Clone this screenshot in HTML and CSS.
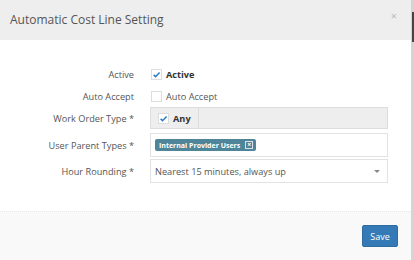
FILE: index.html
```html
<!DOCTYPE html>
<html lang="en">
  <head>
    <meta charset="UTF-8" />
    <meta name="viewport" content="width=device-width, initial-scale=1.0" />
    <title>Automatic Cost Line Setting</title>
    <link rel="stylesheet" href="styles.css">
  </head>
  <body>
    <div class="modal">
      <div class="modal-header">
        <h4 class="modal-title">Automatic Cost Line Setting</h4>
        <span class="close">&times;</span>
      </div>
      <div class="modal-body">
        <div class="row row-active">
          <label class="row-label">Active</label>
          <div class="field">
            <span class="check checked">
              <svg viewBox="0 0 10 10" width="9" height="9"><path d="M1.8 5.4 L4 7.4 L8.4 2.8" fill="none" stroke="#2a7fc4" stroke-width="1.7"/></svg>
            </span>
            <span class="check-text bold">Active</span>
          </div>
        </div>
        <div class="row row-accept">
          <label class="row-label">Auto Accept</label>
          <div class="field">
            <span class="check"></span>
            <span class="check-text">Auto Accept</span>
          </div>
        </div>
        <div class="row row-type">
          <label class="row-label">Work Order Type *</label>
          <div class="field">
            <div class="segment-box">
              <div class="segment">
                <span class="check checked">
                  <svg viewBox="0 0 10 10" width="9" height="9"><path d="M1.8 5.4 L4 7.4 L8.4 2.8" fill="none" stroke="#2a7fc4" stroke-width="1.7"/></svg>
                </span>
                <span class="check-text bold">Any</span>
              </div>
            </div>
          </div>
        </div>
        <div class="row row-parent">
          <label class="row-label">User Parent Types *</label>
          <div class="field">
            <div class="input tags">
              <span class="tag">Internal Provider Users <span class="tag-x">&times;</span></span>
            </div>
          </div>
        </div>
        <div class="row row-round">
          <label class="row-label">Hour Rounding *</label>
          <div class="field">
            <div class="input select">
              <span>Nearest 15 minutes, always up</span>
              <span class="caret"></span>
            </div>
          </div>
        </div>
      </div>
      <div class="modal-footer">
        <button class="btn-save">Save</button>
      </div>
    </div>
    <div class="scroll-thumb"></div>
  </body>
</html>
```

FILE: styles.css
```css
* {
  margin: 0;
  padding: 0;
  box-sizing: border-box;
}
html,
body {
  width: 414px;
  height: 260px;
  overflow: hidden;
}
body {
  background-color: #d4d4d4;
  font-family: "Open Sans", "Liberation Sans", sans-serif;
  color: #555;
  position: relative;
}
.modal {
  width: 411px;
  height: 260px;
  background-color: #fff;
  display: flex;
  flex-direction: column;
}
/* header */
.modal-header {
  height: 40px;
  background-color: #eee;
  display: flex;
  align-items: center;
  justify-content: space-between;
  padding: 0 14px 2px 10px;
}
.modal-title {
  font-size: 12px;
  font-weight: normal;
  color: #555;
}
.close {
  font-size: 11px;
  color: #bbb;
  margin-top: -8px;
}
/* body */
.modal-body {
  height: 171px;
  padding-top: 23px;
}
.row {
  display: flex;
  align-items: center;
}
.row-label {
  width: 134px;
  text-align: right;
  font-size: 9.2px;
  color: #555;
}
.field {
  margin-left: 16px;
  width: 238px;
  display: flex;
  align-items: center;
}
.row-active {
  height: 23px;
}
.row-accept {
  height: 21px;
}
.row-type {
  height: 22px;
}
.row-parent {
  height: 24px;
  margin-top: 4px;
}
.row-round {
  height: 24px;
  margin-top: 2px;
}
.check {
  width: 11px;
  height: 11px;
  border: 1px solid #ddd;
  background-color: #fff;
  display: flex;
  align-items: center;
  justify-content: center;
  margin-left: 1px;
}
.check-text {
  margin-left: 4px;
  font-size: 9.2px;
  color: #555;
}
.bold {
  font-weight: bold;
  color: #333;
}
.segment-box {
  width: 238px;
  height: 22px;
  background-color: #eee;
  border: 1px solid #ddd;
  display: flex;
}
.segment {
  display: flex;
  align-items: center;
  padding: 0 7px 0 6px;
  border-right: 1px solid #ddd;
}
.input {
  width: 238px;
  height: 24px;
  border: 1px solid #e2e2e2;
  display: flex;
  align-items: center;
  padding: 0 5px 0 4px;
  font-size: 9.2px;
  color: #555;
}
.tag {
  background-color: #4e8599;
  color: #fff;
  font-size: 7px;
  font-weight: bold;
  height: 12px;
  padding: 0 3px 0 4px;
  border-radius: 2px;
  display: flex;
  align-items: center;
}
.tag-x {
  margin-left: 5px;
  width: 8px;
  height: 8px;
  border: 1px solid #dde;
  font-size: 7px;
  line-height: 6px;
  text-align: center;
}
.select {
  justify-content: space-between;
}
.caret {
  width: 0;
  height: 0;
  border-left: 3px solid transparent;
  border-right: 3px solid transparent;
  border-top: 3px solid #888;
  margin-right: 2px;
}
/* footer */
.modal-footer {
  flex: 1;
  background-color: #f9f9f9;
  border-top: 1px dotted #e8e8e8;
  display: flex;
  justify-content: flex-end;
  padding: 13px 13px 0 0;
}
.btn-save {
  width: 36px;
  height: 22px;
  background-color: #337ab7;
  border: 1px solid #2e6da4;
  border-radius: 2px;
  color: #fff;
  font-family: "Open Sans", "Liberation Sans", sans-serif;
  font-size: 9px;
}
.scroll-thumb {
  position: absolute;
  left: 412px;
  top: 12px;
  width: 2px;
  height: 30px;
  background-color: #444;
}
```
